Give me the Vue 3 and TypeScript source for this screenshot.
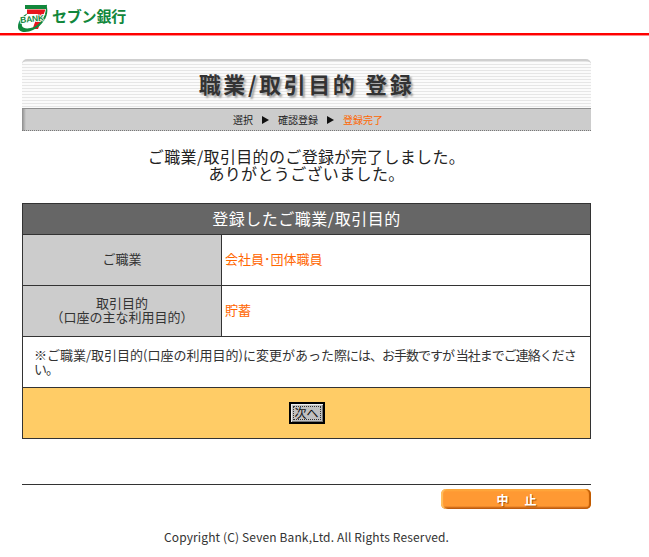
<script setup lang="ts">
const steps: string[] = ['選択', '確認登録']
</script>

<template>
  <div class="page">
    <header class="top">
      <svg class="logo" width="32" height="32" viewBox="0 0 32 32" aria-hidden="true">
        <path d="M8 4 H30 L29 8 H8 Z" fill="#12873c" />
        <path d="M10 8.5 H28.5 L21 28 H15.5 L21 13 H10 Z" fill="#e8141c" />
        <path d="M29 3 C33 12 28 23 16 29 C10 32 1 32 1 26 C1 20 5 15 11 12 C7 16 4 21 5 25 C6 28 12 28 17 26 C25 22 30 13 29 3 Z" fill="#12873c" />
        <text x="3.5" y="22" class="bank" transform="rotate(-6 3.5 22)">BANK</text>
      </svg>
      <span class="brand">セブン銀行</span>
    </header>

    <main class="wrap">
      <section class="banner">
        <h1 class="title">職業/取引目的 登録</h1>
        <nav class="steps">
          <template v-for="s in steps" :key="s">
            <span>{{ s }}</span>
            <span class="arrow"></span>
          </template>
          <span class="current">登録完了</span>
        </nav>
      </section>

      <p class="lead">ご職業/取引目的のご登録が完了しました。<br />ありがとうございました。</p>

      <table class="info">
        <colgroup>
          <col class="col-label" />
          <col />
        </colgroup>
        <thead>
          <tr><th colspan="2" class="head">登録したご職業/取引目的</th></tr>
        </thead>
        <tbody>
          <tr>
            <th class="label">ご職業</th>
            <td class="value">会社員･団体職員</td>
          </tr>
          <tr>
            <th class="label">取引目的<br />（口座の主な利用目的）</th>
            <td class="value">貯蓄</td>
          </tr>
          <tr>
            <td colspan="2" class="note">※ご職業/取引目的(口座の利用目的)に変更があった<span class="tight">際には、お手数ですが 当社までご連絡ください。</span></td>
          </tr>
          <tr>
            <td colspan="2" class="action"><button class="next" type="button"><span>次へ</span></button></td>
          </tr>
        </tbody>
      </table>

      <div class="foot">
        <button class="stop" type="button">中　止</button>
      </div>
      <p class="copy">Copyright (C) Seven Bank,Ltd. All Rights Reserved.</p>
    </main>
  </div>
</template>

<style scoped>
.page {
  width: 649px;
  height: 557px;
  overflow: hidden;
  background: #fff;
  color: #333;
  font-family: "Noto Sans CJK JP", "Noto Sans", sans-serif;
  font-size: 13px;
}
.top {
  height: 33px;
  border-bottom: 2px solid #f00;
  box-shadow: 0 1px 0 #ff8a8a;
  display: flex;
  align-items: center;
  padding-left: 17px;
  gap: 3px;
}
.logo { display: block; flex: none; }
.bank {
  font-family: "Liberation Sans", sans-serif;
  font-size: 8.5px;
  font-weight: 700;
  fill: #12873c;
  stroke: #fff;
  stroke-width: 1.5px;
  paint-order: stroke;
  letter-spacing: -0.2px;
}
.brand {
  color: #12873c;
  font-size: 15px;
  font-weight: 700;
  line-height: 18px;
  letter-spacing: -0.2px;
  margin-bottom: 1px;
}
.wrap {
  width: 569px;
  margin: 24px 0 0 22px;
}
.banner {
  height: 72px;
  border-top-left-radius: 5px;
  border-top-right-radius: 5px;
  overflow: hidden;
  display: flex;
  flex-direction: column;
  background: repeating-linear-gradient(to bottom, #e6e6e6 0, #e6e6e6 1px, #fbfbfb 1px, #fbfbfb 3px);
  border-top: 2px solid #cfcfcf;
  box-sizing: border-box;
}
.title {
  margin: 0;
  height: 47px;
  padding-bottom: 3px;
  box-sizing: border-box;
  display: flex;
  align-items: center;
  justify-content: center;
  color: #333;
  font-size: 22px;
  font-weight: 700;
  letter-spacing: 2.6px;
  text-shadow: 2px 2px 2px #999;
  white-space: pre;
}
.steps {
  height: 23px;
  background: linear-gradient(to right, #8c8c8c 0, #ccc 4px);
  border-top: 1px solid #8f8f8f;
  border-bottom: 1px dotted #777;
  box-sizing: border-box;
  display: flex;
  align-items: center;
  justify-content: center;
  gap: 9px;
  font-size: 10px;
  color: #222;
  padding-left: 3px;
}
.arrow {
  width: 0;
  height: 0;
  border-left: 7px solid #111;
  border-top: 4px solid transparent;
  border-bottom: 4px solid transparent;
}
.lead {
  margin: 17px 0 0;
  text-align: center;
  font-size: 16px;
  line-height: 17px;
  letter-spacing: 0.35px;
  color: #222;
}
.current { color: #ff6600; }
.info {
  width: 569px;
  margin-top: 21px;
  border-collapse: collapse;
  table-layout: fixed;
  font-size: 13px;
}
.col-label { width: 199px; }
.info th, .info td {
  border: 1px solid #333;
  padding: 0;
  font-weight: 400;
}
.info .head {
  height: 27px;
  padding-bottom: 3px;
  background: #666;
  color: #fff;
  font-size: 16px;
  letter-spacing: 0.5px;
  text-align: center;
}
.info .label {
  height: 48px;
  padding-bottom: 2px;
  background: #ccc;
  color: #333;
  line-height: 14px;
  text-align: center;
}
.info .value {
  color: #ff6600;
  padding: 0 0 3px 3px;
}
.info .note {
  height: 50px;
  padding: 0 12px 0 11px;
  line-height: 14px;
  color: #333;
}
.tight { letter-spacing: -1px; }
.action {
  height: 50px;
  background: #ffcc66;
  text-align: center;
}
.next {
  width: 36px;
  height: 22px;
  padding: 2px;
  border: 2px solid #000;
  background: #c0c0c0;
  box-shadow: inset 1px 1px 0 #eee, inset -1px -1px 0 #777;
  font: inherit;
  font-size: 12px;
  color: #111;
  display: inline-block;
  vertical-align: middle;
}
.next span {
  display: block;
  height: 100%;
  line-height: 12px;
  border: 1px dotted #333;
  box-sizing: border-box;
}
.foot {
  margin-top: 45px;
  border-top: 1px solid #333;
  padding-top: 4px;
  display: flex;
  justify-content: flex-end;
}
.stop {
  width: 150px;
  height: 20px;
  padding: 0 0 0 3px;
  border: 0;
  border-radius: 5px;
  background: linear-gradient(to bottom, #ffb040 0, #ff9933 3px, #ff9933 85%, #a84400 100%);
  box-shadow: inset 2px 0 1px #ffc060, inset -2px 0 1px #c05a00;
  color: #fff;
  font: 700 12px "Noto Sans CJK JP", sans-serif;
  letter-spacing: 2px;
  text-shadow: 1px 1px 1px #a85000;
}
.copy {
  margin: 20px 0 0;
  text-align: center;
  font-size: 12px;
  line-height: 16px;
  letter-spacing: 0.13px;
  color: #333;
}
</style>
